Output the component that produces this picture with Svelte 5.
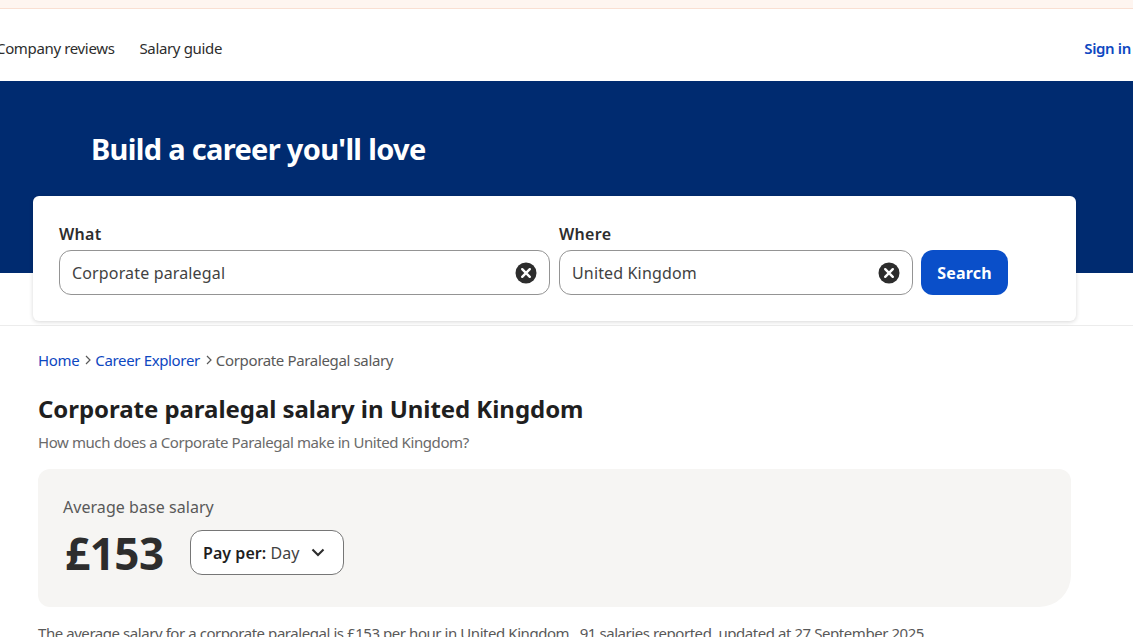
<script>
  const crumbs = [
    { label: 'Home', href: '#' },
    { label: 'Career Explorer', href: '#' }
  ];
</script>

<div class="page">
  <div class="promo"></div>
  <nav class="nav">
    <div class="links">
      <a href="#">Company reviews</a>
      <a href="#">Salary guide</a>
    </div>
    <a class="signin" href="#">Sign in</a>
  </nav>
  <header class="hero">
    <h2>Build a career you'll love</h2>
  </header>
  <div class="searchband">
    <form class="card">
      <div class="field what">
        <span class="label">What</span>
        <div class="input">
          <span>Corporate paralegal</span>
          <svg viewBox="0 0 22 22" width="22" height="22"><circle cx="11" cy="11" r="10.5" fill="#2d2d2d"/><path d="M7.2 7.2l7.6 7.6M14.8 7.2l-7.6 7.6" stroke="#fff" stroke-width="2.4" stroke-linecap="round"/></svg>
        </div>
      </div>
      <div class="field where">
        <span class="label">Where</span>
        <div class="input">
          <span>United Kingdom</span>
          <svg viewBox="0 0 22 22" width="22" height="22"><circle cx="11" cy="11" r="10.5" fill="#2d2d2d"/><path d="M7.2 7.2l7.6 7.6M14.8 7.2l-7.6 7.6" stroke="#fff" stroke-width="2.4" stroke-linecap="round"/></svg>
        </div>
      </div>
      <button type="button" class="search">Search</button>
    </form>
  </div>
  <main class="main">
    <ol class="crumbs">
      {#each crumbs as c}
        <li><a href={c.href}>{c.label}</a><svg viewBox="0 0 8 12" width="8" height="12"><path d="M2 2l4 4-4 4" fill="none" stroke="#595959" stroke-width="1.2"/></svg></li>
      {/each}
      <li>Corporate Paralegal salary</li>
    </ol>
    <h1>Corporate paralegal salary in United Kingdom</h1>
    <p class="sub">How much does a Corporate Paralegal make in United Kingdom?</p>
    <section class="panel">
      <div class="avg">Average base salary</div>
      <div class="row">
        <span class="amount">£153</span>
        <button type="button" class="pay">
          <span><b>Pay per:</b> Day</span>
          <svg viewBox="0 0 14 9" width="14" height="9"><path d="M1.5 1.5L7 7l5.5-5.5" fill="none" stroke="#2d2d2d" stroke-width="2.1"/></svg>
        </button>
      </div>
    </section>
    <p class="note">The average salary for a corporate paralegal is £153 per hour in United Kingdom.&nbsp; 91 salaries reported, updated at 27 September 2025</p>
  </main>
</div>

<style>
  :global(body) {
    margin: 0;
    background: #fff;
    overflow: hidden;
  }
  .page {
    height: 637px;
    overflow: hidden;
    font-family: "Noto Sans", sans-serif;
    color: #2d2d2d;
    font-size: 15px;
    letter-spacing: -0.35px;
  }
  a { text-decoration: none; }
  .promo {
    height: 8px;
    background: #fef5f0;
    border-bottom: 1px solid #f9dfd2;
  }
  .nav {
    height: 72px;
    display: flex;
    align-items: center;
    justify-content: space-between;
    padding: 6px 2px 0 0;
    box-sizing: border-box;
    margin-left: -4px;
  }
  .links { display: flex; gap: 25px; }
  .links a { color: #2d2d2d; }
  .signin { color: #0d47c1; font-weight: 600; }
  .hero {
    height: 192px;
    background: #002b70;
    padding: 52px 0 0 91px;
    box-sizing: border-box;
  }
  .hero h2 {
    margin: 0;
    color: #fff;
    font-size: 29px;
    line-height: 32px;
    font-weight: 700;
    letter-spacing: -0.68px;
  }
  .searchband {
    display: flow-root;
    height: 52px;
    border-bottom: 1px solid #ececec;
    padding: 0 57px 0 33px;
  }
  .card {
    position: relative;
    margin-top: -77px;
    height: 125px;
    background: #fff;
    border-radius: 6px;
    box-shadow: 0 1px 4px rgba(0, 0, 0, 0.16);
    padding: 28px 0 0 26px;
    box-sizing: border-box;
    display: flex;
    align-items: flex-start;
  }
  .field { display: flex; flex-direction: column; }
  .what { width: 491px; margin-right: 9px; }
  .where { width: 354px; margin-right: 8px; }
  .label {
    font-size: 16px;
    line-height: 21px;
    font-weight: 600;
    color: #2d2d2d;
    letter-spacing: 0.3px;
  }
  .input {
    margin-top: 5px;
    height: 45px;
    box-sizing: border-box;
    border: 1px solid #949494;
    border-radius: 12px;
    padding: 0 12px;
    display: flex;
    align-items: center;
    justify-content: space-between;
    font-size: 16px;
    color: #424242;
    letter-spacing: 0.15px;
  }
  .search {
    margin-top: 26px;
    width: 87px;
    height: 45px;
    background: #0a4fc9;
    border: 0;
    border-radius: 12px;
    color: #fff;
    font: 700 16px "Noto Sans", sans-serif;
    letter-spacing: 0.2px;
  }
  .main { padding: 24px 62px 0 38px; }
  .crumbs {
    list-style: none;
    margin: 0;
    padding: 0;
    display: flex;
    line-height: 20px;
    color: #595959;
  }
  .crumbs li { display: flex; align-items: center; }
  .crumbs a { color: #0d47c1; }
  .crumbs svg { margin: 0 3px 0 5px; }
  h1 {
    margin: 23px 0 0;
    font-size: 24px;
    line-height: 32px;
    font-weight: 700;
    color: #1f1f1f;
    letter-spacing: -0.05px;
  }
  .sub {
    margin: 7px 0 0;
    line-height: 20px;
    color: #6a6a6a;
    letter-spacing: -0.42px;
  }
  .panel {
    margin-top: 17px;
    height: 138px;
    box-sizing: border-box;
    background: #f6f5f3;
    border-radius: 12px 12px 32px 12px;
    padding: 27px 25px 0;
  }
  .avg {
    font-size: 16px;
    line-height: 22px;
    color: #595959;
    letter-spacing: 0.05px;
  }
  .row {
    display: flex;
    align-items: flex-start;
    margin-top: 9px;
    padding-left: 2px;
  }
  .amount {
    margin-top: 1px;
    font-size: 44px;
    line-height: 50px;
    font-weight: 700;
    color: #2d2d2d;
    width: 125px;
    letter-spacing: -0.5px;
  }
  .pay {
    margin-top: 3px;
    width: 154px;
    height: 45px;
    background: #fff;
    border: 1px solid #767676;
    border-radius: 12px;
    display: flex;
    align-items: center;
    justify-content: space-between;
    padding: 0 18px 0 12px;
    box-sizing: border-box;
    font: 400 16px "Noto Sans", sans-serif;
    letter-spacing: 0.05px;
    color: #424242;
  }
  .pay b { font-weight: 600; color: #1f1f1f; }
  .note {
    margin: 16px 0 0;
    white-space: nowrap;
    line-height: 20px;
    color: #595959;
    letter-spacing: -0.44px;
  }
</style>
